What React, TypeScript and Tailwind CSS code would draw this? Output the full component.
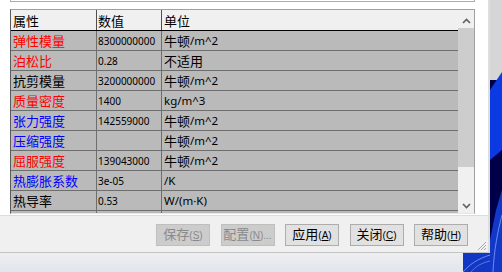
import React from 'react';

const C = ({ children }: { children: React.ReactNode }) => (
  <span className="text-[13px]">{children}</span>
);
const L = ({ children }: { children: React.ReactNode }) => (
  <span className="font-['Noto_Sans','Noto_Sans_CJK_SC',sans-serif] text-[11.5px]">{children}</span>
);

const N2 = (
  <>
    <C>牛顿</C>
    <L>/m^2</L>
  </>
);

type Row = { name: string; color: string; value: string; unit: React.ReactNode };

const rows: Row[] = [
  { name: '弹性模量', color: 'text-[#ff0000]', value: '8300000000', unit: N2 },
  { name: '泊松比', color: 'text-[#ff0000]', value: '0.28', unit: <C>不适用</C> },
  { name: '抗剪模量', color: 'text-black', value: '3200000000', unit: N2 },
  { name: '质量密度', color: 'text-[#ff0000]', value: '1400', unit: <L>kg/m^3</L> },
  { name: '张力强度', color: 'text-[#0000ff]', value: '142559000', unit: N2 },
  { name: '压缩强度', color: 'text-[#0000ff]', value: '', unit: N2 },
  { name: '屈服强度', color: 'text-[#ff0000]', value: '139043000', unit: N2 },
  { name: '热膨胀系数', color: 'text-[#0000ff]', value: '3e-05', unit: <L>/K</L> },
  { name: '热导率', color: 'text-black', value: '0.53', unit: <L>W/(m·K)</L> },
  { name: '比热', color: 'text-black', value: '1386', unit: <L>J/(kg·K)</L> },
];

function Btn({
  label,
  hot,
  tail,
  disabled,
}: {
  label: string;
  hot: string;
  tail?: string;
  disabled?: boolean;
}) {
  return (
    <button
      className={
        disabled
          ? 'flex h-[22px] w-[54px] items-center justify-center overflow-hidden border border-[#bfbfbf] bg-[#cccccc] leading-[16px] text-[#8a8a8a]'
          : 'flex h-[22px] w-[54px] items-center justify-center overflow-hidden border border-[#adadad] bg-[#e1e1e1] leading-[16px] text-black'
      }
    >
      <span className="whitespace-nowrap text-[13px]">
        {label}
        <span className="font-['Liberation_Sans',sans-serif] text-[10px]">
          (<span className="underline">{hot}</span>){tail}
        </span>
      </span>
    </button>
  );
}

function Chevron({ up }: { up?: boolean }) {
  return (
    <svg width="9" height="6" viewBox="0 0 9 6">
      <path
        d={up ? 'M1 5 L4.5 1.5 L8 5' : 'M1 1 L4.5 4.5 L8 1'}
        fill="none"
        stroke="#606060"
        strokeWidth="1.6"
      />
    </svg>
  );
}

export default function App() {
  return (
    <div className="flex h-[272px] w-[502px] overflow-hidden bg-[#e6e9ee] font-['Noto_Sans_CJK_SC','Liberation_Sans',sans-serif]">
      <div className="flex w-[490px] flex-col">
        {/* dialog */}
        <div className="relative flex h-[253px] flex-col border-r-2 border-b border-r-[#dedede] border-b-[#c4c4c4] bg-[#f0f0f0]">
          <div className="h-[216px] border-b border-[#dcdcdc] bg-white pl-[10px]">
            <div className="h-[2px] w-[465px] border-x border-b border-[#adadad]" />
            <div className="mt-[7px] flex h-[205px] w-[465px] border border-l-[#5a5a5a] border-t-[#a0a0a0] border-r-[#a0a0a0] border-b-[#e6e6e6]">
              {/* list */}
              <div className="flex flex-1 flex-col overflow-hidden">
                <div className="flex h-[21px] shrink-0 border-b border-black bg-[#f0f0f0] text-[13px] leading-none text-black">
                  <div className="flex w-[86px] items-center border-r border-[#505050] pl-[2px]">属性</div>
                  <div className="flex w-[65px] items-center border-r border-[#505050] pl-[1px]">数值</div>
                  <div className="flex flex-1 items-center pl-[2px]">单位</div>
                </div>
                {rows.map((r) => (
                  <div
                    key={r.name}
                    className="flex h-[20px] shrink-0 border-b border-[#6e6e6e] bg-[#bababa] leading-none text-black"
                  >
                    <div className={`flex w-[86px] items-center border-r border-[#6e6e6e] pl-[2px] text-[13px] ${r.color}`}>
                      {r.name}
                    </div>
                    <div className="flex w-[65px] items-center border-r border-[#6e6e6e] pl-[1px] font-['Noto_Sans',sans-serif] text-[10px]">
                      {r.value}
                    </div>
                    <div className="flex flex-1 items-center pl-[2px]">{r.unit}</div>
                  </div>
                ))}
              </div>
              {/* scrollbar */}
              <div className="flex w-[16px] flex-col bg-[#f0f0f0]">
                <div className="flex h-[18px] items-center justify-center pt-[3px]">
                  <Chevron up />
                </div>
                <div className="h-[139px] bg-[#cdcdcd]" />
                <div className="flex-1" />
                <div className="flex h-[18px] items-center justify-center pt-[3px]">
                  <Chevron />
                </div>
              </div>
            </div>
          </div>
          <div className="flex flex-1 items-start justify-end gap-[10.5px] pr-[20px] pt-[8px]">
            <Btn label="保存" hot="S" disabled />
            <Btn label="配置" hot="N" tail="..." disabled />
            <Btn label="应用" hot="A" />
            <Btn label="关闭" hot="C" />
            <Btn label="帮助" hot="H" />
          </div>
          <svg className="absolute bottom-[1px] right-[1px]" width="11" height="11" viewBox="0 0 11 11">
            <path d="M10 2 L2 10 M10 5 L5 10 M10 8 L8 10" stroke="#a8a8a8" strokeWidth="1" />
          </svg>
        </div>
        {/* below dialog */}
        <div className="flex h-[19px]">
          <div className="flex-1 bg-gradient-to-b from-[#eceef2] to-[#e2e6ec]" />
          <svg width="27" height="19" viewBox="0 0 27 19">
            <rect width="27" height="19" fill="#1237c4" />
            <path d="M0 19 C6 12 14 6 27 2" stroke="#6d8cf0" strokeWidth="1" fill="none" />
            <path d="M8 19 C12 14 18 10 27 8" stroke="#5a7ae8" strokeWidth="1" fill="none" />
          </svg>
        </div>
      </div>
      {/* wallpaper strip */}
      <svg width="12" height="272" viewBox="0 0 12 272">
        <rect width="12" height="272" fill="#00004a" />
        <rect width="12" height="80" fill="#d6d6d6" />
        <polygon points="0,90 12,72 12,150 0,160" fill="#0b3ae2" />
        <polygon points="6,210 12,190 12,272 0,272 0,240" fill="#1338c8" />
        <path d="M3 272 C4 250 8 230 12 215" stroke="#6d8cf0" strokeWidth="1" fill="none" />
      </svg>
    </div>
  );
}
